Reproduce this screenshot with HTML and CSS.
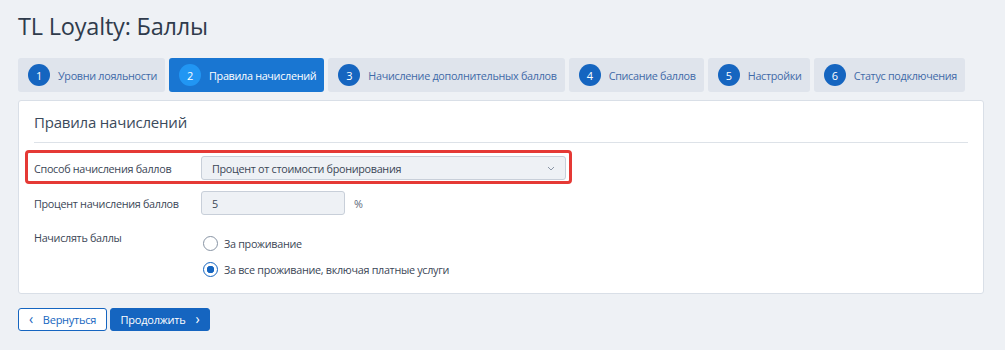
FILE: index.html
```html
<!DOCTYPE html>
<html lang="ru">
<head>
    <meta charset="UTF-8">
    <title>TL Loyalty: Баллы</title>
    <link rel="stylesheet" href="styles.css">
</head>
<body>
<h1 class="page-title">TL Loyalty: Баллы</h1>

<div class="steps">
    <div class="step"><span class="num">1</span>Уровни лояльности</div>
    <div class="step active"><span class="num">2</span>Правила начислений</div>
    <div class="step"><span class="num">3</span>Начисление дополнительных баллов</div>
    <div class="step"><span class="num">4</span>Списание баллов</div>
    <div class="step"><span class="num">5</span>Настройки</div>
    <div class="step"><span class="num">6</span>Статус подключения</div>
</div>

<div class="panel">
    <h2 class="panel-title">Правила начислений</h2>

    <div class="row row-marked">
        <label class="label">Способ начисления баллов</label>
        <div class="select">
            Процент от стоимости бронирования
            <svg class="caret" width="8" height="5" viewBox="0 0 8 5"><path d="M1 1l3 3 3-3" fill="none" stroke="#8a96a6" stroke-width="1"/></svg>
        </div>
    </div>

    <div class="row">
        <label class="label">Процент начисления баллов</label>
        <div class="input">5</div>
        <span class="unit">%</span>
    </div>

    <div class="row row-radios">
        <label class="label">Начислять баллы</label>
        <div class="radios">
            <div class="radio"><span class="dot"></span>За проживание</div>
            <div class="radio checked"><span class="dot"></span>За все проживание, включая платные услуги</div>
        </div>
    </div>
</div>

<div class="actions">
    <button class="btn btn-back"><span class="chev">‹</span>Вернуться</button>
    <button class="btn btn-next">Продолжить<span class="chev">›</span></button>
</div>
</body>
</html>
```

FILE: styles.css
```css
body {
    font-family: 'Open Sans', 'Noto Sans', sans-serif;
    margin: 0;
    padding: 0 21px 0 18px;
    background: #eef1f5;
    color: #3b4656;
    font-size: 10.8px;
    letter-spacing: -0.3px;
}
.page-title {
    margin: 0;
    padding-top: 11px;
    height: 47px;
    font-size: 23.5px;
    font-weight: 400;
    letter-spacing: -0.2px;
    color: #2f3b4c;
    line-height: 30px;
}
.steps {
    display: flex;
    gap: 4px;
}
.step {
    display: flex;
    align-items: center;
    white-space: nowrap;
    height: 34px;
    padding: 0 8px 0 10px;
    background: #dfe4ec;
    border-radius: 3px;
    color: #3f6aa8;
}
.step .num {
    flex: none;
    width: 22px;
    height: 22px;
    border-radius: 50%;
    background: #1565c0;
    color: #fff;
    font-size: 11px;
    display: flex;
    align-items: center;
    justify-content: center;
    margin-right: 8px;
}
.step.active {
    background: #1976d2;
    color: #fff;
}
.step.active .num {
    background: #2196f3;
}
.panel {
    box-sizing: border-box;
    margin-top: 8px;
    background: #fff;
    border: 1px solid #d9dfe7;
    border-radius: 3px;
    padding: 0 15px;
    height: 194px;
}
.panel-title {
    margin: 0;
    font-size: 15px;
    font-weight: 400;
    letter-spacing: -0.2px;
    color: #3b4a5c;
    line-height: 20px;
    padding: 11px 0 10px;
    border-bottom: 1px solid #dde2e8;
}
.row {
    display: flex;
    align-items: center;
    white-space: nowrap;
}
.row-marked {
    width: fit-content;
    margin: 7px -9px 0;
    padding: 3px 3px 1px 6px;
    border: 3px solid #e53935;
    border-radius: 4px;
}
.row-marked + .row {
    margin-top: 7px;
}
.label {
    width: 167px;
    color: #3b4656;
}
.select, .input {
    box-sizing: border-box;
    height: 24px;
    background: #eef1f5;
    border: 1px solid #c8cfd9;
    border-radius: 3px;
    padding: 0 10px;
    display: flex;
    align-items: center;
    color: #3b4656;
}
.select {
    width: 365px;
    justify-content: space-between;
}
.input {
    width: 144px;
}
.unit {
    margin-left: 9px;
    color: #5b6778;
}
.row-radios {
    align-items: flex-start;
    margin-top: 15px;
}
.radios {
    display: flex;
    flex-direction: column;
    gap: 11px;
    padding-top: 6px;
}
.radio {
    display: flex;
    align-items: center;
    height: 15px;
    margin-left: 2px;
}
.dot {
    box-sizing: border-box;
    width: 15px;
    height: 15px;
    border-radius: 50%;
    border: 1.5px solid #8894a4;
    margin-right: 6px;
    background: #fff;
}
.radio.checked .dot {
    border-color: #1565c0;
    background: radial-gradient(circle, #1565c0 0 3.5px, #fff 4px);
}
.actions {
    display: flex;
    gap: 3px;
    margin-top: 14px;
}
.btn {
    box-sizing: border-box;
    font-family: inherit;
    font-size: 11px;
    letter-spacing: -0.25px;
    height: 23px;
    border-radius: 3px;
    cursor: pointer;
    display: flex;
    align-items: center;
    justify-content: center;
    gap: 10px;
}
.btn-back {
    background: #fff;
    color: #1565c0;
    border: 1px solid #1565c0;
    width: 89px;
}
.btn-next {
    background: #1565c0;
    color: #fff;
    border: 1px solid #1565c0;
    width: 100px;
}
.chev {
    font-size: 14px;
    line-height: 1;
    margin-top: -2px;
}
```
